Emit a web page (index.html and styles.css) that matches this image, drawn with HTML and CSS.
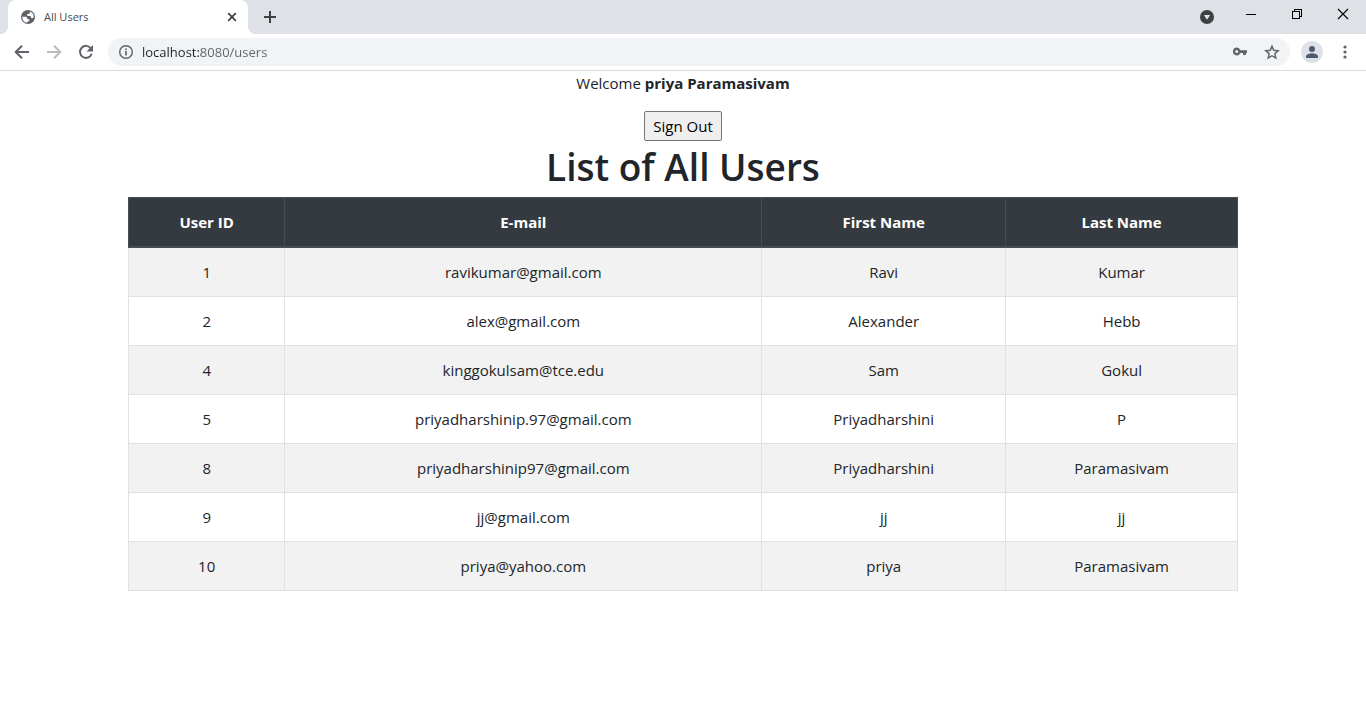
FILE: index.html
```html
<!DOCTYPE html>
<html lang="en">
<head>
<meta charset="utf-8">
<meta name="viewport" content="width=device-width, initial-scale=1">
<title>All Users</title>
<link rel="stylesheet" href="styles.css">
</head>
<body>
<header class="browser">
  <div class="tab-strip">
    <div class="tab">
      <svg class="favicon" viewBox="0 0 16 16" width="16" height="16" aria-hidden="true"><circle cx="8" cy="8" r="7" fill="#5f6368"/><path d="M2.300 7.700h2.900c1.300 0 2.200.6 2.200 1.700v.8h1.700c.5.5.5 1.700-.2 2.100h-1.200v1.300C4.600 13.900 2.100 11.300 2.300 7.700z" fill="#fff"/><path d="M9.800 2.600v1.100c0 .8-.6 1.300-1.400 1.300H7.100v1.200c0 .4.3.7.7.7h2c.7 0 1.200.5 1.200 1.200v.9h2.400c1-3-.8-5.600-3.600-6.400z" fill="#fff"/></svg>
      <span class="tab-title">All Users</span>
      <button class="icon-button tab-close" type="button" aria-label="Close tab"><svg viewBox="0 0 16 16" width="16" height="16"><path d="M4.200 4.200l7.600 7.600M11.800 4.200l-7.600 7.600" stroke="#3c4043" stroke-width="1.700"/></svg></button>
    </div>
    <button class="icon-button new-tab" type="button" aria-label="New tab"><svg viewBox="0 0 16 16" width="16" height="16"><path d="M8 2v12M2 8h12" stroke="#3c4043" stroke-width="2"/></svg></button>
    <div class="window-controls">
      <button class="icon-button tab-search" type="button" aria-label="Search tabs"><svg viewBox="0 0 16 16" width="16" height="16"><circle cx="8" cy="8" r="7" fill="#3c4043"/><path d="M4.800 6h6.400L8 10.700z" fill="#dee1e6"/></svg></button>
      <button class="icon-button window-button" type="button" aria-label="Minimize"><svg viewBox="0 0 12 12" width="12" height="12" shape-rendering="crispEdges"><path d="M1 6.500h10" stroke="#000"/></svg></button>
      <button class="icon-button window-button" type="button" aria-label="Restore"><svg viewBox="0 0 12 12" width="12" height="12" shape-rendering="crispEdges"><path d="M1.500 3.500h7v7h-7zM3.500 3.500v-2h7v7h-2" fill="none" stroke="#000"/></svg></button>
      <button class="icon-button window-button" type="button" aria-label="Close"><svg viewBox="0 0 12 12" width="12" height="12"><path d="M1 1l10 10M11 1L1 11" stroke="#000" stroke-width="1.100"/></svg></button>
    </div>
  </div>
  <div class="toolbar">
    <div class="navigation">
      <button class="icon-button" type="button" aria-label="Back"><svg viewBox="0 0 16 16" width="16" height="16" fill="none" stroke="#5f6368" stroke-width="2"><path d="M15 8H2.500M8 1.700L1.700 8 8 14.300"/></svg></button>
      <button class="icon-button" type="button" aria-label="Forward" disabled><svg viewBox="0 0 16 16" width="16" height="16" fill="none" stroke="#babcbe" stroke-width="2"><path d="M1 8h12.500M8 1.700L14.300 8 8 14.300"/></svg></button>
      <button class="icon-button" type="button" aria-label="Reload"><svg viewBox="0 0 16 16" width="16" height="16"><path d="M13 4.500A6 6 0 1 0 13.700 9.800" fill="none" stroke="#5f6368" stroke-width="2"/><path d="M15 1v6.500H8.500z" fill="#5f6368"/></svg></button>
    </div>
    <div class="address-bar">
      <button class="icon-button" type="button" aria-label="View site information"><svg viewBox="0 0 16 16" width="16" height="16"><circle cx="8" cy="8" r="6.300" fill="none" stroke="#5f6368" stroke-width="1.400"/><path d="M8 7v4.500M8 4.400V6" stroke="#5f6368" stroke-width="1.700"/></svg></button>
      <input class="address" type="text" aria-label="Address" value="localhost:8080/users" spellcheck="false">
      <button class="icon-button" type="button" aria-label="Saved passwords"><svg viewBox="0 0 16 16" width="16" height="16"><path fill-rule="evenodd" d="M4.700 3.600a3.900 3.900 0 0 1 3.700 2.600H15v2.900h-1.100v2h-2.800v-2H8.400A3.900 3.900 0 1 1 4.700 3.600zm0 2.500a1.500 1.500 0 1 0 0 3 1.500 1.500 0 0 0 0-3z" fill="#5f6368"/></svg></button>
      <button class="icon-button" type="button" aria-label="Bookmark this tab"><svg viewBox="0 0 16 16" width="16" height="16"><path d="M8 2.200l1.700 4.100 4.500.4-3.400 2.900 1 4.400L8 11.700 4.200 14l1-4.400-3.400-2.900 4.500-.4z" fill="none" stroke="#5f6368" stroke-width="1.400"/></svg></button>
    </div>
    <button class="icon-button profile" type="button" aria-label="Profile"><svg viewBox="0 0 22 22" width="22" height="22"><circle cx="11" cy="11" r="11" fill="#dee1e6"/><circle cx="11" cy="8" r="3" fill="#4d5a70"/><path d="M5 17v-1.700c0-2 4-3.100 6-3.100s6 1.100 6 3.100V17z" fill="#4d5a70"/></svg></button>
    <button class="icon-button" type="button" aria-label="Menu"><svg viewBox="0 0 16 16" width="16" height="16" fill="#5f6368"><circle cx="8" cy="3" r="1.600"/><circle cx="8" cy="8" r="1.600"/><circle cx="8" cy="13" r="1.600"/></svg></button>
  </div>
</header>
<main class="container">
  <p class="welcome">Welcome <b>priya Paramasivam</b></p>
  <form class="sign-out-form"><button class="sign-out" type="button">Sign Out</button></form>
  <h1 class="page-title">List of All Users</h1>
  <table class="users">
    <colgroup><col class="col-id"><col class="col-email"><col class="col-first"><col class="col-last"></colgroup>
    <thead>
      <tr><th scope="col">User ID</th><th scope="col">E-mail</th><th scope="col">First Name</th><th scope="col">Last Name</th></tr>
    </thead>
    <tbody>
      <tr><td>1</td><td>ravikumar@gmail.com</td><td>Ravi</td><td>Kumar</td></tr>
      <tr><td>2</td><td>alex@gmail.com</td><td>Alexander</td><td>Hebb</td></tr>
      <tr><td>4</td><td>kinggokulsam@tce.edu</td><td>Sam</td><td>Gokul</td></tr>
      <tr><td>5</td><td>priyadharshinip.97@gmail.com</td><td>Priyadharshini</td><td>P</td></tr>
      <tr><td>8</td><td>priyadharshinip97@gmail.com</td><td>Priyadharshini</td><td>Paramasivam</td></tr>
      <tr><td>9</td><td>jj@gmail.com</td><td>jj</td><td>jj</td></tr>
      <tr><td>10</td><td>priya@yahoo.com</td><td>priya</td><td>Paramasivam</td></tr>
    </tbody>
  </table>
</main>
</body>
</html>
```
FILE: styles.css
```css
*, *::before, *::after { box-sizing: border-box; }

body {
  margin: 0;
  background: #fff;
  color: #212529;
  font-family: "Open Sans", "Noto Sans", sans-serif;
  font-size: 15px;
  line-height: 24px;
}

svg { display: block; }

.icon-button {
  display: flex;
  flex: none;
  align-items: center;
  justify-content: center;
  padding: 0;
  border: 0;
  background: none;
}

/* Browser frame */
.browser { border-bottom: 1px solid #d9dadd; }

.tab-strip {
  display: flex;
  height: 34px;
  padding-left: 8px;
  background: #dee1e6;
}

.tab {
  position: relative;
  display: flex;
  align-items: center;
  gap: 8px;
  width: 240px;
  padding: 0 8px 0 12px;
  border-radius: 8px 8px 0 0;
  background: #fff;
}

.tab::before, .tab::after {
  content: "";
  position: absolute;
  bottom: 0;
  width: 8px;
  height: 8px;
}
.tab::before { right: 100%; background: radial-gradient(circle at 0 0, transparent 8px, #fff 8px); }
.tab::after { left: 100%; background: radial-gradient(circle at 100% 0, transparent 8px, #fff 8px); }

.tab-title {
  flex: 1;
  color: #45494d;
  font-size: 11px;
}

.new-tab { margin-left: 14px; }

.window-controls {
  display: flex;
  margin-left: auto;
}
.tab-search { margin-right: 13px; }
.window-button { width: 46px; height: 28px; }

.toolbar {
  display: flex;
  align-items: center;
  height: 36px;
  padding: 0 13px 0 14px;
}

.navigation { display: flex; gap: 16px; }

.address-bar {
  display: flex;
  flex: 1;
  align-items: center;
  gap: 16px;
  height: 28px;
  margin: 0 11px 0 14px;
  padding: 0 10px;
  border-radius: 14px;
  background: #f1f3f4;
}

.address {
  flex: 1;
  min-width: 0;
  margin-left: -8px;
  padding: 0;
  border: 0;
  outline: 0;
  background: linear-gradient(to right, #202124 59px, #5f6368 59px);
  background-clip: text;
  -webkit-background-clip: text;
  -webkit-text-fill-color: transparent;
  color: #5f6368;
  font: 13px/20px "Open Sans", "Noto Sans", sans-serif;
}

.profile { margin-right: 14px; }

/* Page */
.container {
  width: 100%;
  max-width: 1140px;
  margin: 0 auto;
  padding: 0 15px;
  text-align: center;
}

.welcome { margin: 0 0 16px; }
.welcome b { font-weight: 700; }

.sign-out-form { display: flex; justify-content: center; }

.sign-out {
  padding: 2px 8px;
  border: 1px solid #767676;
  border-radius: 2px;
  background: #efefef;
  color: #000;
  font: inherit;
}

.page-title {
  margin: 0 0 4px;
  font-size: 37px;
  font-weight: 600;
  line-height: 52px;
}

.users {
  width: 100%;
  margin: 0 0 16px;
  border-collapse: collapse;
  border: 1px solid #dee2e6;
  table-layout: fixed;
}
.col-id { width: 14.1%; }
.col-email { width: 43%; }
.col-first { width: 22%; }
.col-last { width: 20.9%; }

.users th, .users td {
  padding: 12px;
  border: 1px solid #dee2e6;
}
.users thead th {
  border-color: #454d55;
  border-bottom-width: 2px;
  background: #343a40;
  color: #fff;
  font-weight: 700;
}
.users tbody tr:nth-child(odd) { background: #f2f2f2; }
```
